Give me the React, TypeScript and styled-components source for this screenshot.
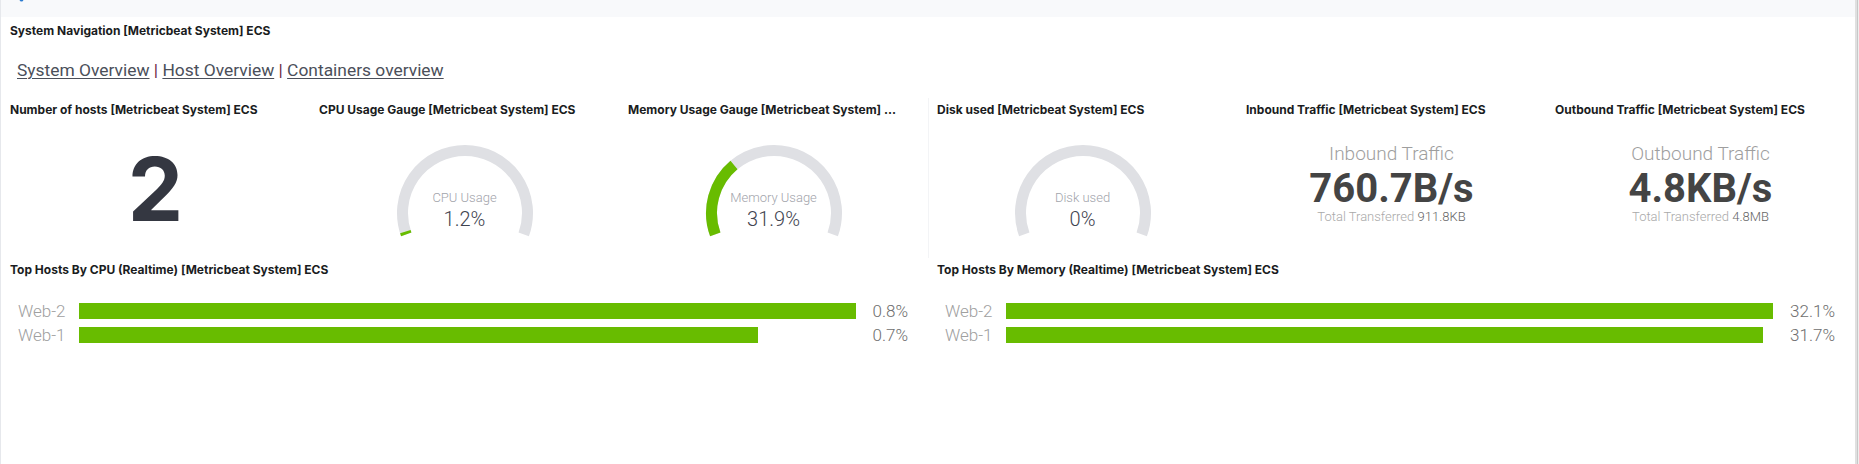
import React from 'react';
import styled, { createGlobalStyle } from 'styled-components';

const GlobalStyle = createGlobalStyle`
  html, body { margin: 0; padding: 0; background: #ffffff; }
  body { font-family: Inter, "Noto Sans", sans-serif; }
  #root { height: 464px; }
`;

const Shell = styled.div`
  display: flex;
  width: 1859px;
  height: 464px;
  overflow: hidden;
  background: #ffffff;
`;

const Main = styled.div`
  flex: 1;
  min-width: 0;
  display: flex;
  flex-direction: column;
  border-left: 1px solid #e6e8ec;
`;

const ScrollEdge = styled.div`
  width: 4px;
  flex-shrink: 0;
  background: linear-gradient(to right, #e0e0e0 0 2px, #c8c8c8 2px 3px, #eeeeee 3px 4px);
`;

const TopBar = styled.div`
  height: 17px;
  flex-shrink: 0;
  display: flex;
  align-items: flex-start;
  padding-left: 17px;
  background: #f8f9fb;
`;

const NavPanel = styled.section`
  height: 81px;
  flex-shrink: 0;
  display: flex;
  flex-direction: column;
`;

const PanelTitle = styled.h2<{ $top?: number }>`
  margin: ${(p) => p.$top ?? 0}px 0 0 0;
  height: 24px;
  padding: 0 27px 0 9px;
  font: 700 12px/24px Inter, "Noto Sans", sans-serif;
  color: #1a1c21;
  white-space: nowrap;
  overflow: hidden;
  text-overflow: ellipsis;
`;

const NavLinks = styled.div`
  margin-top: 17px;
  padding-left: 16px;
  font: 400 17.4px/20px Roboto, "Liberation Sans", sans-serif;
  color: #4b4f5a;
  white-space: nowrap;
`;

const NavLink = styled.a`
  color: #4b4f5a;
  text-decoration: underline;
  text-decoration-thickness: 1px;
  text-underline-offset: 2px;
`;

const Pipe = styled.span`
  color: #6a2b45;
`;

const MetricRow = styled.div`
  height: 160px;
  flex-shrink: 0;
  display: grid;
  grid-template-columns: repeat(6, 1fr);
`;

const ChartRow = styled.div`
  flex: 1;
  display: grid;
  grid-template-columns: repeat(2, 1fr);
`;

const Panel = styled.section<{ $divider?: boolean }>`
  min-width: 0;
  display: flex;
  flex-direction: column;
  box-shadow: ${(p) => (p.$divider ? 'inset 1px 0 0 #f3f4f6' : 'none')};
`;

const PanelBody = styled.div`
  flex: 1;
  display: flex;
  justify-content: center;
  align-items: flex-start;
  padding-top: 23px;
`;

const BigNumber = styled.div`
  font: 700 88px/88px Inter, "Noto Sans", sans-serif;
  color: #343741;
`;

const GaugeWrap = styled.div`
  position: relative;
  width: 140px;
  height: 93px;
`;

const GaugeLabel = styled.div`
  position: absolute;
  left: 0;
  right: 0;
  top: 45px;
  text-align: center;
  font: 300 13px/16px Roboto, "Liberation Sans", sans-serif;
  color: #a2a4ab;
`;

const GaugeValue = styled.div`
  position: absolute;
  left: 0;
  right: 0;
  top: 62px;
  text-align: center;
  font: 300 20px/24px Roboto, "Liberation Sans", sans-serif;
  color: #3f4450;
`;

const Metric = styled.div`
  margin-top: -3px;
  display: flex;
  flex-direction: column;
  align-items: center;
  text-align: center;
  white-space: nowrap;
`;

const MetricLabel = styled.div`
  font: 300 19px/24px Roboto, "Liberation Sans", sans-serif;
  color: #9e9e9e;
`;

const MetricValue = styled.div`
  font: 700 40px/46px Roboto, "Liberation Sans", sans-serif;
  color: #444444;
`;

const MetricSub = styled.div`
  margin-top: -3px;
  font: 300 13px/16px Roboto, "Liberation Sans", sans-serif;
  color: #a9a9a9;
`;

const MetricSubValue = styled.span`
  color: #666666;
`;

const TopN = styled.div`
  display: grid;
  grid-template-columns: auto 1fr auto;
  grid-auto-rows: 24px;
  align-items: center;
  padding: 17px 20px 0 17px;
`;

const TopLabel = styled.div`
  padding-right: 13px;
  font: 300 17px/24px Roboto, "Liberation Sans", sans-serif;
  color: #a0a0a0;
`;

const BarTrack = styled.div`
  height: 16px;
  display: flex;
`;

const Bar = styled.div`
  height: 16px;
  background: #68bc00;
`;

const TopValue = styled.div`
  padding-left: 17px;
  text-align: right;
  font: 300 17px/24px Roboto, "Liberation Sans", sans-serif;
  color: #6e6e6e;
`;

const R = 62.5;
const CX = 70;
const CY = 68;
const SPAN = 220;
const START = -SPAN / 2;

function polar(deg: number): [number, number] {
  const a = (deg * Math.PI) / 180;
  return [CX + R * Math.sin(a), CY - R * Math.cos(a)];
}

function arcPath(from: number, to: number) {
  const [x1, y1] = polar(from);
  const [x2, y2] = polar(to);
  const large = to - from > 180 ? 1 : 0;
  return `M ${x1.toFixed(2)} ${y1.toFixed(2)} A ${R} ${R} 0 ${large} 1 ${x2.toFixed(2)} ${y2.toFixed(2)}`;
}

function Gauge({ label, value, pct }: { label: string; value: string; pct: number }) {
  const end = START + (SPAN * pct) / 100;
  return (
    <GaugeWrap>
      <svg width="140" height="93" viewBox="0 0 140 93">
        <path d={arcPath(START, START + SPAN)} fill="none" stroke="#dfe0e4" strokeWidth={11} />
        {pct > 0 && <path d={arcPath(START, end)} fill="none" stroke="#68bc00" strokeWidth={11} />}
      </svg>
      <GaugeLabel>{label}</GaugeLabel>
      <GaugeValue>{value}</GaugeValue>
    </GaugeWrap>
  );
}

function Traffic({ label, value, total }: { label: string; value: string; total: string }) {
  return (
    <Metric>
      <MetricLabel>{label}</MetricLabel>
      <MetricValue>{value}</MetricValue>
      <MetricSub>
        Total Transferred <MetricSubValue>{total}</MetricSubValue>
      </MetricSub>
    </Metric>
  );
}

type Host = { name: string; value: number; text: string };

function TopHosts({ hosts }: { hosts: Host[] }) {
  const max = Math.max(...hosts.map((h) => h.value));
  return (
    <TopN>
      {hosts.map((h) => (
        <React.Fragment key={h.name}>
          <TopLabel>{h.name}</TopLabel>
          <BarTrack>
            <Bar style={{ width: `${(h.value / max) * 100}%` }} />
          </BarTrack>
          <TopValue>{h.text}</TopValue>
        </React.Fragment>
      ))}
    </TopN>
  );
}

export default function App() {
  return (
    <>
      <GlobalStyle />
      <Shell>
        <Main>
          <TopBar>
            <svg width="8" height="3" viewBox="0 0 8 3">
              <ellipse cx="3.5" cy="-1" rx="2" ry="2.6" fill="#2b7bd0" />
            </svg>
          </TopBar>
          <NavPanel>
            <PanelTitle $top={2}>System Navigation [Metricbeat System] ECS</PanelTitle>
            <NavLinks>
              <NavLink href="#">System Overview</NavLink> <Pipe>|</Pipe>{' '}
              <NavLink href="#">Host Overview</NavLink> <Pipe>|</Pipe>{' '}
              <NavLink href="#">Containers overview</NavLink>
            </NavLinks>
          </NavPanel>
          <MetricRow>
            <Panel>
              <PanelTitle>Number of hosts [Metricbeat System] ECS</PanelTitle>
              <PanelBody>
                <BigNumber>2</BigNumber>
              </PanelBody>
            </Panel>
            <Panel>
              <PanelTitle>CPU Usage Gauge [Metricbeat System] ECS</PanelTitle>
              <PanelBody>
                <Gauge label="CPU Usage" value="1.2%" pct={1.2} />
              </PanelBody>
            </Panel>
            <Panel>
              <PanelTitle>Memory Usage Gauge [Metricbeat System] ECS</PanelTitle>
              <PanelBody>
                <Gauge label="Memory Usage" value="31.9%" pct={31.9} />
              </PanelBody>
            </Panel>
            <Panel $divider>
              <PanelTitle>Disk used [Metricbeat System] ECS</PanelTitle>
              <PanelBody>
                <Gauge label="Disk used" value="0%" pct={0} />
              </PanelBody>
            </Panel>
            <Panel>
              <PanelTitle>Inbound Traffic [Metricbeat System] ECS</PanelTitle>
              <PanelBody>
                <Traffic label="Inbound Traffic" value="760.7B/s" total="911.8KB" />
              </PanelBody>
            </Panel>
            <Panel>
              <PanelTitle>Outbound Traffic [Metricbeat System] ECS</PanelTitle>
              <PanelBody>
                <Traffic label="Outbound Traffic" value="4.8KB/s" total="4.8MB" />
              </PanelBody>
            </Panel>
          </MetricRow>
          <ChartRow>
            <Panel>
              <PanelTitle>Top Hosts By CPU (Realtime) [Metricbeat System] ECS</PanelTitle>
              <TopHosts
                hosts={[
                  { name: 'Web-2', value: 0.8, text: '0.8%' },
                  { name: 'Web-1', value: 0.7, text: '0.7%' },
                ]}
              />
            </Panel>
            <Panel>
              <PanelTitle>Top Hosts By Memory (Realtime) [Metricbeat System] ECS</PanelTitle>
              <TopHosts
                hosts={[
                  { name: 'Web-2', value: 32.1, text: '32.1%' },
                  { name: 'Web-1', value: 31.7, text: '31.7%' },
                ]}
              />
            </Panel>
          </ChartRow>
        </Main>
        <ScrollEdge />
      </Shell>
    </>
  );
}
